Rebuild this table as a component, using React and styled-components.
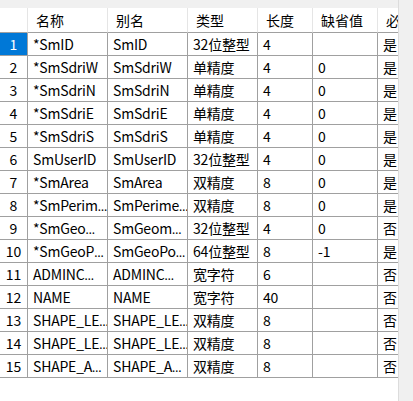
import React from "react";
import styled, { createGlobalStyle } from "styled-components";

const GlobalStyle = createGlobalStyle`
  html, body {
    margin: 0;
    padding: 0;
    background: #ffffff;
  }
  body {
    font-family: "Noto Sans CJK SC", "Noto Sans", sans-serif;
  }
`;

// janela inteira: grade + barra de rolagem
const Window = styled.div`
  display: flex;
  width: 413px;
  height: 401px;
  overflow: hidden;
  background: #ffffff;
`;

const GridArea = styled.div`
  width: 398px;
  display: flex;
  flex-direction: column;
  overflow: hidden;
  border-right: 1px solid #dcdcdc;
`;

const TopStrip = styled.div`
  height: 8px;
  background: #f0f0f0;
  flex-shrink: 0;
`;

const ScrollBar = styled.div`
  flex: 1;
  background: #f0f0f0;
`;

const Row = styled.div`
  display: flex;
  height: ${(p) => (p.$header ? 25 : 23)}px;
  flex-shrink: 0;
  width: 500px;
`;

const Cell = styled.div`
  box-sizing: border-box;
  width: ${(p) => p.$w}px;
  flex-shrink: 0;
  height: 100%;
  border-right: 1px solid ${(p) => (p.$header ? "#e5e5e5" : "#a0a0a0")};
  border-bottom: 1px solid #a0a0a0;
  padding: 0 ${(p) => (p.$header ? 8 : 5)}px;
  font-size: 14px;
  letter-spacing: ${(p) => (p.$header ? 0 : -0.2)}px;
  line-height: ${(p) => (p.$header ? 24 : 22)}px;
  color: #000;
  white-space: nowrap;
  overflow: hidden;
`;

const RowHead = styled(Cell)`
  padding: 0;
  letter-spacing: 0;
  text-align: center;
  background: ${(p) => (p.$selected ? "#0078d7" : "#ffffff")};
  color: ${(p) => (p.$selected ? "#ffffff" : "#000")};
`;

// reticências estreitas, como no grid original
const Dots = styled.span`
  font-family: "Noto Sans", sans-serif;
  font-size: 12px;
  letter-spacing: -1px;
`;

const widths = [80, 80, 70, 55, 65, 60];
const headers = ["名称", "别名", "类型", "长度", "缺省值", "必填"];

const rows = [
  ["*SmID", "SmID", "32位整型", "4", "", "是"],
  ["*SmSdriW", "SmSdriW", "单精度", "4", "0", "是"],
  ["*SmSdriN", "SmSdriN", "单精度", "4", "0", "是"],
  ["*SmSdriE", "SmSdriE", "单精度", "4", "0", "是"],
  ["*SmSdriS", "SmSdriS", "单精度", "4", "0", "是"],
  ["SmUserID", "SmUserID", "32位整型", "4", "0", "是"],
  ["*SmArea", "SmArea", "双精度", "8", "0", "是"],
  ["*SmPerim…", "SmPerime…", "双精度", "8", "0", "是"],
  ["*SmGeo…", "SmGeom…", "32位整型", "4", "0", "否"],
  ["*SmGeoP…", "SmGeoPo…", "64位整型", "8", "-1", "是"],
  ["ADMINC…", "ADMINC…", "宽字符", "6", "", "否"],
  ["NAME", "NAME", "宽字符", "40", "", "否"],
  ["SHAPE_LE…", "SHAPE_LE…", "双精度", "8", "", "否"],
  ["SHAPE_LE…", "SHAPE_LE…", "双精度", "8", "", "否"],
  ["SHAPE_A…", "SHAPE_A…", "双精度", "8", "", "否"],
];

const CellText = ({ text }) =>
  text.endsWith("…") ? (
    <>
      {text.slice(0, -1)}
      <Dots>…</Dots>
    </>
  ) : (
    text
  );

const App = () => {
  return (
    <>
      <GlobalStyle />
      <Window>
        <GridArea>
          <TopStrip />
          <Row $header>
            <RowHead $w={28} $header />
            {headers.map((h, i) => (
              <Cell key={h} $w={widths[i]} $header>
                {h}
              </Cell>
            ))}
          </Row>
          {rows.map((r, idx) => (
            <Row key={idx}>
              <RowHead $w={28} $selected={idx === 0}>
                {idx + 1}
              </RowHead>
              {r.map((v, i) => (
                <Cell key={i} $w={widths[i]}>
                  <CellText text={v} />
                </Cell>
              ))}
            </Row>
          ))}
        </GridArea>
        <ScrollBar />
      </Window>
    </>
  );
};

export default App;
